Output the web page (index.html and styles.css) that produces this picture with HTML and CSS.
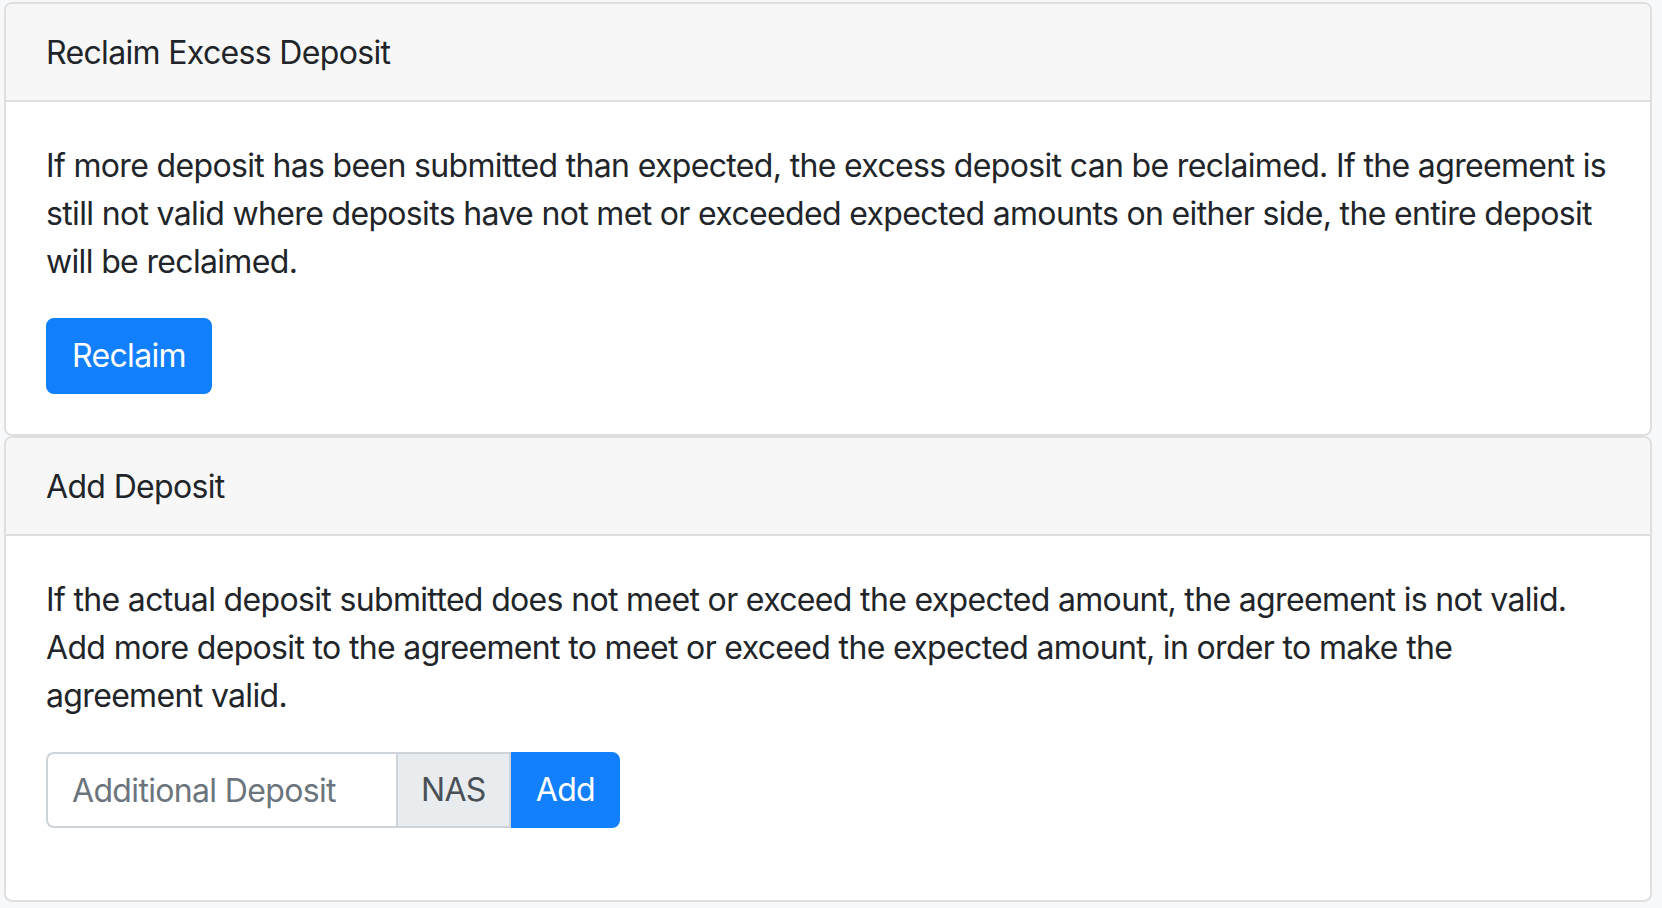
FILE: index.html
```html
<!DOCTYPE html>
<html>
<head>
<meta charset="utf-8">
<title>Deposit</title>
<link rel="stylesheet" href="styles.css">
</head>
<body>
<div class="page">
  <section class="card">
    <div class="card-header">Reclaim Excess Deposit</div>
    <div class="card-body">
      <p class="card-text">If more deposit has been submitted than expected, the excess deposit can be reclaimed. If the agreement is still not valid where deposits have not met or exceeded expected amounts on either side, the entire deposit will be reclaimed.</p>
      <button class="btn btn-primary" type="button">Reclaim</button>
    </div>
  </section>
  <section class="card">
    <div class="card-header">Add Deposit</div>
    <div class="card-body">
      <p class="card-text">If the actual deposit submitted does not meet or exceed the expected amount, the agreement is not valid. Add more deposit to the agreement to meet or exceed the expected amount, in order to make the agreement valid.</p>
      <div class="input-group">
        <input class="form-control" type="text" placeholder="Additional Deposit">
        <span class="input-group-text">NAS</span>
        <button class="btn btn-primary btn-append" type="button">Add</button>
      </div>
    </div>
  </section>
</div>
</body>
</html>
```
FILE: styles.css
```css
* { box-sizing: border-box; }
html, body { margin: 0; padding: 0; }
body {
  background: #f7f8fa;
  font-family: Inter, "Liberation Sans", sans-serif;
  font-size: 32px;
  line-height: 48px;
  letter-spacing: -0.66px;
  color: #212529;
}
.page {
  padding: 2px 10px 0 4px;
  display: flex;
  flex-direction: column;
}
.card {
  background: #fff;
  border: 2px solid #dfdfdf;
  border-radius: 8px;
  overflow: hidden;
}
.card-header {
  background: #f7f7f7;
  border-bottom: 2px solid #dfdfdf;
  padding: 25px 40px 23px;
}
.card-body {
  padding: 40px;
}
.card-text {
  margin: 0 0 32px;
}
.btn {
  font-family: inherit;
  font-size: 32px;
  line-height: 48px;
  letter-spacing: -0.66px;
  padding: 12px 24px;
  border: 2px solid transparent;
  border-radius: 8px;
  cursor: pointer;
  display: inline-block;
}
.btn-primary {
  background: #127ffd;
  border-color: #127ffd;
  color: #fff;
}
.input-group {
  display: flex;
  align-items: stretch;
  margin-bottom: 32px;
}
.form-control {
  width: 350px;
  height: 76px;
  font-family: inherit;
  font-size: 32px;
  letter-spacing: -0.66px;
  padding: 12px 24px;
  border: 2px solid #ced4da;
  border-right: 0;
  border-radius: 8px 0 0 8px;
  color: #495057;
  background: #fff;
  outline: none;
}
.form-control::placeholder { color: #6c757d; }
.input-group-text {
  display: flex;
  align-items: center;
  padding: 12px 23px;
  background: #e9ecef;
  border: 2px solid #ced4da;
  color: #495057;
}
.btn-append {
  border-radius: 0 8px 8px 0;
  padding: 12px 23px;
}
```
